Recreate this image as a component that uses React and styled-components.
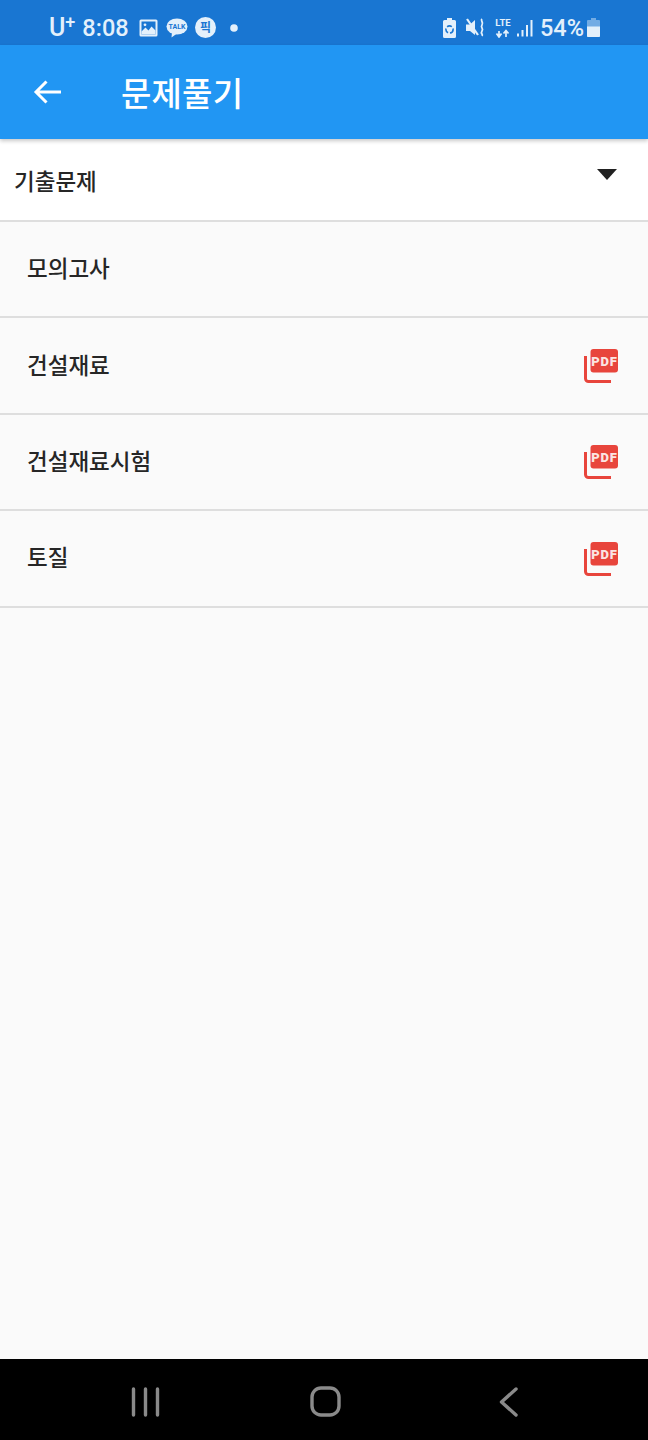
import React from "react";
import styled, { createGlobalStyle } from "styled-components";

const Global = createGlobalStyle`
  html, body {
    margin: 0;
    padding: 0;
    background: #fafafa;
  }
  * { box-sizing: border-box; }
`;

const Screen = styled.div`
  width: 648px;
  height: 1440px;
  display: flex;
  flex-direction: column;
  overflow: hidden;
  background: #fafafa;
  font-family: "Noto Sans CJK KR", "Noto Sans", sans-serif;
`;

const StatusBar = styled.div`
  height: 45px;
  flex: none;
  background: #1976d2;
  color: #e3f0fb;
  display: flex;
  align-items: center;
  justify-content: space-between;
  padding: 10px 48px 0 49px;
  font-family: Roboto, "Liberation Sans", sans-serif;
`;

const StatusGroup = styled.div`
  display: flex;
  align-items: center;
`;

const Carrier = styled.span`
  font-size: 25px;
  font-weight: 500;
  line-height: 28px;
  margin-right: 7px;
  sup {
    font-size: 18px;
    line-height: 0;
    vertical-align: 8px;
  }
`;

const Clock = styled.span`
  font-size: 23.5px;
  font-weight: 500;
  margin-right: 10px;
`;

const Percent = styled.span`
  font-size: 23.5px;
  font-weight: 500;
  margin: 0 0 0 7px;
`;

const AppBar = styled.header`
  height: 94px;
  flex: none;
  background: #2196f3;
  display: flex;
  align-items: center;
  padding: 0 28px 1px 32px;
  position: relative;
  z-index: 1;
  box-shadow: 0 2px 4px rgba(0, 0, 0, 0.22);
`;

const BackButton = styled.div`
  width: 32px;
  height: 32px;
  margin-right: 57px;
  display: flex;
`;

const Title = styled.h1`
  margin: 0;
  color: #fff;
  font-size: 33px;
  font-weight: 500;
  letter-spacing: 0.2px;
  line-height: 40px;
`;

const Dropdown = styled.div`
  height: 83px;
  flex: none;
  background: #fff;
  border-bottom: 2px solid #dedede;
  display: flex;
  justify-content: space-between;
  padding: 0 31px 0 14px;
`;

const DropdownLabel = styled.span`
  font-size: 22.5px;
  font-weight: 500;
  color: #262626;
  line-height: 82px;
`;

const Caret = styled.span`
  width: 0;
  height: 0;
  margin-top: 30px;
  border-left: 10.5px solid transparent;
  border-right: 10.5px solid transparent;
  border-top: 11px solid #212121;
`;

const Row = styled.div`
  height: 96.4px;
  flex: none;
  border-bottom: 2px solid #dedede;
  display: flex;
  align-items: center;
  justify-content: space-between;
  padding: 0 29px 0 27px;
`;

const RowLabel = styled.span`
  font-size: 22.5px;
  font-weight: 500;
  color: #262626;
  line-height: 32px;
  margin-top: -4px;
`;

const Spacer = styled.div`
  flex: 1;
`;

const NavBar = styled.nav`
  height: 81px;
  flex: none;
  background: #000;
  display: grid;
  grid-template-columns: 291px 1fr 149px;
  align-items: center;
  padding: 4px 0 0;
`;

const NavSlot = styled.div`
  display: flex;
  justify-content: ${props => props.$align};
`;

const StyledPdf = styled.svg`
  width: 36px;
  height: 36px;
  display: block;
  margin-top: 1px;
`;

function PdfIcon() {
  return (
    <StyledPdf viewBox="0 0 36 36">
      <path d="M2.500 8v22.500a3 3 0 0 0 3 3h22.500" fill="none" stroke="#e8453c" strokeWidth="3" />
      <rect x="7.500" y="1" width="27.500" height="23.500" rx="3" fill="#e8453c" />
      <text
        x="21.500"
        y="17.500"
        textAnchor="middle"
        fontFamily="Roboto, 'Liberation Sans', sans-serif"
        fontSize="13"
        fontWeight="900"
        letterSpacing="0.800"
        fill="#fbe4e2"
      >
        PDF
      </text>
    </StyledPdf>
  );
}

const rows = [
  { label: "모의고사", pdf: false },
  { label: "건설재료", pdf: true },
  { label: "건설재료시험", pdf: true },
  { label: "토질", pdf: true }
];

function App() {
  return (
    <Screen>
      <Global />
      <StatusBar>
        <StatusGroup>
          <Carrier>
            U<sup>+</sup>
          </Carrier>
          <Clock>8:08</Clock>
          <svg width="19" height="18" viewBox="0 0 19 18" style={{ marginRight: 8 }}>
            <rect x="0.500" y="0.500" width="18" height="17" rx="1.500" fill="#e3f0fb" />
            <rect x="2.500" y="2.500" width="14" height="13" fill="#1976d2" />
            <path d="M2.500 15.500v-3l4-4 3 3 3-4 4 4v4z" fill="#e3f0fb" />
            <circle cx="6" cy="5.800" r="1.400" fill="#e3f0fb" />
          </svg>
          <svg width="22" height="20" viewBox="0 0 22 20" style={{ marginRight: 7 }}>
            <ellipse cx="11" cy="8.500" rx="10.500" ry="8" fill="#e3f0fb" />
            <path d="M6 14l-.5 5.500 5.500-4z" fill="#e3f0fb" />
            <text
              x="11"
              y="11"
              textAnchor="middle"
              fontSize="7"
              fontWeight="700"
              fontFamily="Roboto, sans-serif"
              fill="#1976d2"
            >
              TALK
            </text>
          </svg>
          <svg width="21" height="21" viewBox="0 0 21 21" style={{ marginRight: 14 }}>
            <circle cx="10.500" cy="10.500" r="10.500" fill="#e3f0fb" />
            <text
              x="10.500"
              y="15"
              textAnchor="middle"
              fontSize="12"
              fontWeight="700"
              fontFamily="'Noto Sans CJK KR', sans-serif"
              fill="#1976d2"
            >
              픽
            </text>
          </svg>
          <svg width="8" height="8" viewBox="0 0 8 8">
            <circle cx="4" cy="4" r="3.800" fill="#e3f0fb" />
          </svg>
        </StatusGroup>
        <StatusGroup>
          <svg width="13" height="20" viewBox="0 0 13 20" style={{ marginRight: 10 }}>
            <path d="M4 0h5v2h2.500a1.500 1.500 0 0 1 1.500 1.500V18.500a1.500 1.500 0 0 1-1.500 1.500h-10A1.500 1.500 0 0 1 0 18.500V3.500A1.500 1.500 0 0 1 1.500 2H4z" fill="#e3f0fb" />
            <circle cx="6.500" cy="11.500" r="3.600" fill="none" stroke="#1976d2" strokeWidth="1.600" strokeDasharray="5 2" />
          </svg>
          <svg width="20" height="20" viewBox="0 0 20 20" style={{ marginRight: 8 }}>
            <path d="M0 6.500h4l5-4.500v15l-5-4H0z" fill="#e3f0fb" />
            <path d="M1 1l11 16" stroke="#e3f0fb" strokeWidth="2.200" />
            <path d="M16 1c-2 2 2 3 0 6s2 3 0 6 1.500 3 0 5" fill="none" stroke="#e3f0fb" strokeWidth="1.800" />
          </svg>
          <svg width="18" height="20" viewBox="0 0 18 20" style={{ marginRight: 5 }}>
            <text x="9" y="8" textAnchor="middle" fontSize="9.500" fontWeight="700" fontFamily="Roboto, sans-serif" fill="#e3f0fb">
              LTE
            </text>
            <path d="M5 19v-6M2.500 15.500L5 19l2.500-3.500M12 19v-6M9.500 15.500L12 12.500l2.500 3" fill="none" stroke="#e3f0fb" strokeWidth="1.700" />
          </svg>
          <svg width="16" height="18" viewBox="0 0 16 18">
            <rect x="0" y="14.500" width="2" height="3" fill="#e3f0fb" />
            <rect x="4.500" y="11" width="2" height="6.500" fill="#e3f0fb" />
            <rect x="9" y="6" width="2" height="11.500" fill="#e3f0fb" />
            <rect x="13.500" y="1" width="2" height="16.500" fill="#e3f0fb" />
          </svg>
          <Percent>54%</Percent>
          <svg width="13" height="19" viewBox="0 0 13 19" style={{ marginLeft: 3 }}>
            <path d="M4 0h5v2h3a1 1 0 0 1 1 1v15a1 1 0 0 1-1 1H1a1 1 0 0 1-1-1V3a1 1 0 0 1 1-1h3z" fill="#e3f0fb" fillOpacity="0.45" />
            <path d="M0 8.500h13V18a1 1 0 0 1-1 1H1a1 1 0 0 1-1-1z" fill="#e3f0fb" />
          </svg>
        </StatusGroup>
      </StatusBar>
      <AppBar>
        <BackButton>
          <svg width="32" height="32" viewBox="0 0 32 32">
            <path d="M29 16H4M14.500 5.500L4 16l10.500 10.500" fill="none" stroke="#fff" strokeWidth="3" />
          </svg>
        </BackButton>
        <Title>문제풀기</Title>
      </AppBar>
      <Dropdown>
        <DropdownLabel>기출문제</DropdownLabel>
        <Caret />
      </Dropdown>
      {rows.map(row => (
        <Row key={row.label}>
          <RowLabel>{row.label}</RowLabel>
          {row.pdf && <PdfIcon />}
        </Row>
      ))}
      <Spacer />
      <NavBar>
        <NavSlot $align="flex-end">
          <svg width="29" height="30" viewBox="0 0 29 30" style={{ marginRight: 131 }}>
            <path d="M2.500 2v26M14.500 2v26M26.500 2v26" stroke="#8a8a8a" strokeWidth="3.400" strokeLinecap="round" />
          </svg>
        </NavSlot>
        <NavSlot $align="flex-start">
          <svg width="32" height="32" viewBox="0 0 32 32" style={{ marginLeft: 19 }}>
            <rect x="2" y="2" width="27" height="27" rx="9" fill="none" stroke="#8a8a8a" strokeWidth="3.400" />
          </svg>
        </NavSlot>
        <NavSlot $align="flex-start">
          <svg width="20" height="30" viewBox="0 0 20 30">
            <path d="M17 2L2.500 15 17 28" fill="none" stroke="#8a8a8a" strokeWidth="3.400" strokeLinecap="round" strokeLinejoin="round" />
          </svg>
        </NavSlot>
      </NavBar>
    </Screen>
  );
}

export default App;
